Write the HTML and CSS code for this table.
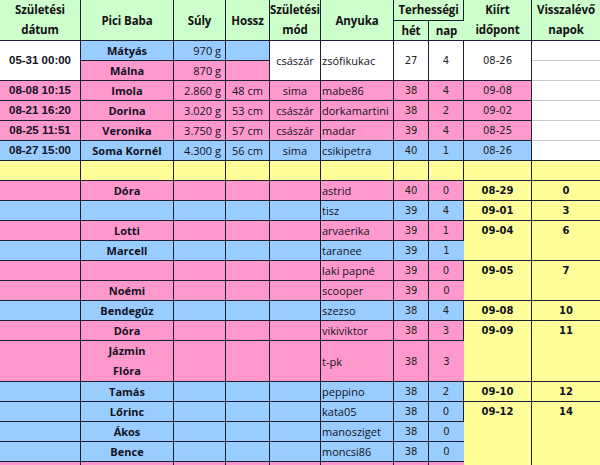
FILE: index.html
```html
<!DOCTYPE html>
<html lang="hu">
<head>
<meta charset="utf-8">
<title>Pici Babák</title>
<link rel="stylesheet" href="styles.css">
</head>
<body>
<table class="babies">
  <colgroup>
    <col class="c-date"><col class="c-name"><col class="c-weight"><col class="c-len"><col class="c-mode"><col class="c-mom"><col class="c-week"><col class="c-day"><col class="c-due"><col class="c-left">
  </colgroup>
  <thead>
    <tr>
      <th rowspan="2" class="two">Születési<br>dátum</th>
      <th rowspan="2">Pici Baba</th>
      <th rowspan="2">Súly</th>
      <th rowspan="2">Hossz</th>
      <th rowspan="2" class="two">Születési<br>mód</th>
      <th rowspan="2">Anyuka</th>
      <th colspan="2" class="sub">Terhességi</th>
      <th rowspan="2" class="two">Kiírt<br>időpont</th>
      <th rowspan="2" class="two">Visszalévő<br>napok</th>
    </tr>
    <tr>
      <th>hét</th>
      <th>nap</th>
    </tr>
  </thead>
  <tbody>
    <tr>
      <td rowspan="2" class="date white">05-31 00:00</td>
      <td class="name blue">Mátyás</td>
      <td class="wt blue">970 g</td>
      <td class="blue"></td>
      <td rowspan="2" class="mode white">császár</td>
      <td rowspan="2" class="mom white">zsófikukac</td>
      <td rowspan="2" class="num white">27</td>
      <td rowspan="2" class="num white">4</td>
      <td rowspan="2" class="num white">08-26</td>
      <td class="left white"></td>
    </tr>
    <tr>
      <td class="name pink">Málna</td>
      <td class="wt pink">870 g</td>
      <td class="pink"></td>
      <td class="left white"></td>
    </tr>
    <tr class="pink">
      <td class="date">08-08 10:15</td><td class="name">Imola</td><td class="wt">2.860 g</td><td class="mode">48 cm</td><td class="mode">sima</td><td class="mom">mabe86</td><td class="num">38</td><td class="num">4</td><td class="num">09-08</td><td class="left white"></td>
    </tr>
    <tr class="pink">
      <td class="date">08-21 16:20</td><td class="name">Dorina</td><td class="wt">3.020 g</td><td class="mode">53 cm</td><td class="mode">császár</td><td class="mom">dorkamartini</td><td class="num">38</td><td class="num">2</td><td class="num">09-02</td><td class="left white"></td>
    </tr>
    <tr class="pink">
      <td class="date">08-25 11:51</td><td class="name">Veronika</td><td class="wt">3.750 g</td><td class="mode">57 cm</td><td class="mode">császár</td><td class="mom">madar</td><td class="num">39</td><td class="num">4</td><td class="num">08-25</td><td class="left white"></td>
    </tr>
    <tr class="blue">
      <td class="date">08-27 15:00</td><td class="name">Soma Kornél</td><td class="wt">4.300 g</td><td class="mode">56 cm</td><td class="mode">sima</td><td class="mom">csikipetra</td><td class="num">40</td><td class="num">1</td><td class="num">08-26</td><td class="left white last"></td>
    </tr>
    <tr class="yellow">
      <td></td><td></td><td></td><td></td><td></td><td></td><td></td><td></td><td></td><td></td>
    </tr>
    <tr class="pink">
      <td></td><td class="name">Dóra</td><td></td><td></td><td></td><td class="mom2">astrid</td><td class="num2">40</td><td class="num2">0</td><td class="due yellow">08-29</td><td class="due yellow">0</td>
    </tr>
    <tr class="blue">
      <td></td><td class="name"></td><td></td><td></td><td></td><td class="mom2">tisz</td><td class="num2">39</td><td class="num2">4</td><td class="due yellow">09-01</td><td class="due yellow">3</td>
    </tr>
    <tr class="pink">
      <td></td><td class="name">Lotti</td><td></td><td></td><td></td><td class="mom2">arvaerika</td><td class="num2">39</td><td class="num2">1</td><td rowspan="2" class="due yellow">09-04</td><td rowspan="2" class="due yellow">6</td>
    </tr>
    <tr class="blue">
      <td></td><td class="name">Marcell</td><td></td><td></td><td></td><td class="mom2">taranee</td><td class="num2">39</td><td class="num2">1</td>
    </tr>
    <tr class="pink">
      <td></td><td class="name"></td><td></td><td></td><td></td><td class="mom2">laki papné</td><td class="num2">39</td><td class="num2">0</td><td rowspan="2" class="due yellow">09-05</td><td rowspan="2" class="due yellow">7</td>
    </tr>
    <tr class="pink">
      <td></td><td class="name">Noémi</td><td></td><td></td><td></td><td class="mom2">scooper</td><td class="num2">39</td><td class="num2">0</td>
    </tr>
    <tr class="blue">
      <td></td><td class="name">Bendegúz</td><td></td><td></td><td></td><td class="mom2">szezso</td><td class="num2">38</td><td class="num2">4</td><td class="due yellow">09-08</td><td class="due yellow">10</td>
    </tr>
    <tr class="pink">
      <td></td><td class="name">Dóra</td><td></td><td></td><td></td><td class="mom2">vikiviktor</td><td class="num2">38</td><td class="num2">3</td><td rowspan="2" class="due yellow">09-09</td><td rowspan="2" class="due yellow">11</td>
    </tr>
    <tr class="pink tall">
      <td></td><td class="name">Jázmin<br>Flóra</td><td></td><td></td><td></td><td class="mom2">t-pk</td><td class="num2">38</td><td class="num2">3</td>
    </tr>
    <tr class="blue">
      <td></td><td class="name">Tamás</td><td></td><td></td><td></td><td class="mom2">peppino</td><td class="num2">38</td><td class="num2">2</td><td class="due yellow">09-10</td><td class="due yellow">12</td>
    </tr>
    <tr class="blue">
      <td></td><td class="name">Lőrinc</td><td></td><td></td><td></td><td class="mom2">kata05</td><td class="num2">38</td><td class="num2">0</td><td rowspan="4" class="due yellow">09-12</td><td rowspan="4" class="due yellow">14</td>
    </tr>
    <tr class="blue">
      <td></td><td class="name">Ákos</td><td></td><td></td><td></td><td class="mom2">manosziget</td><td class="num2">38</td><td class="num2">0</td>
    </tr>
    <tr class="blue">
      <td></td><td class="name">Bence</td><td></td><td></td><td></td><td class="mom2">moncsi86</td><td class="num2">38</td><td class="num2">0</td>
    </tr>
    <tr class="pink">
      <td></td><td class="name"></td><td></td><td></td><td></td><td class="mom2"></td><td class="num2"></td><td class="num2"></td>
    </tr>
  </tbody>
</table>
</body>
</html>
```
FILE: styles.css
```css
html, body {
  margin: 0;
  padding: 0;
  background: #ffffff;
  overflow: hidden;
}

.babies {
  border-collapse: separate;
  border-spacing: 0;
  table-layout: fixed;
  width: 600px;
  font-family: "Open Sans", "DejaVu Sans", sans-serif;
  font-size: 11px;
  color: #111122;
}

.c-date { width: 81px; }
.c-name { width: 93px; }
.c-weight { width: 52px; }
.c-len { width: 44px; }
.c-mode { width: 51px; }
.c-mom { width: 73px; }
.c-week { width: 35px; }
.c-day { width: 35px; }
.c-due { width: 68px; }
.c-left { width: 68px; }

.babies th,
.babies td {
  box-sizing: border-box;
  border-right: 1px solid #1a1f33;
  border-bottom: 1px solid #1a1f33;
  padding: 0 2px;
  height: 20px;
  line-height: 19px;
  white-space: nowrap;
  overflow: hidden;
  text-align: center;
  vertical-align: middle;
}

.babies th {
  background: #ccffcc;
  font-weight: 700;
  font-size: 11.5px;
  color: #111;
  padding: 0;
  letter-spacing: -0.1px;
}

.babies th.two {
  line-height: 20px;
}

.babies tr td.blue, .babies tr.blue td { background: #99ccff; }
.babies tr td.pink, .babies tr.pink td { background: #ff99cc; }
.babies tr.yellow td, .babies tr td.yellow { background: #ffff99; }
.babies tr td.white { background: #ffffff; }

.babies tr td.left {
  border-right: none;
  border-bottom-color: #c8c8c8;
}
.babies tr td.left.last { border-bottom-color: #1a1f33; }
.babies tr td:last-child { border-right: none; }
.babies tr th:last-child { border-right: none; }

.date {
  font-family: "Liberation Sans", sans-serif;
  font-weight: 700;
  font-size: 11.5px;
}

.name {
  font-weight: 700;
}

.babies td.wt {
  text-align: right;
  padding-right: 4px;
}

.babies td.mom,
.babies td.mom2 {
  text-align: left;
  padding-left: 1px;
}

.num, .num2 {
  font-family: "DejaVu Sans", sans-serif;
  font-size: 10px;
  color: #222;
}

.babies td.due {
  font-family: "DejaVu Sans", sans-serif;
  font-weight: 700;
  font-size: 10px;
  vertical-align: top;
}

.babies tr.tall td {
  height: 40px;
}
.babies tr.tall td.name {
  line-height: 20px;
}
```
